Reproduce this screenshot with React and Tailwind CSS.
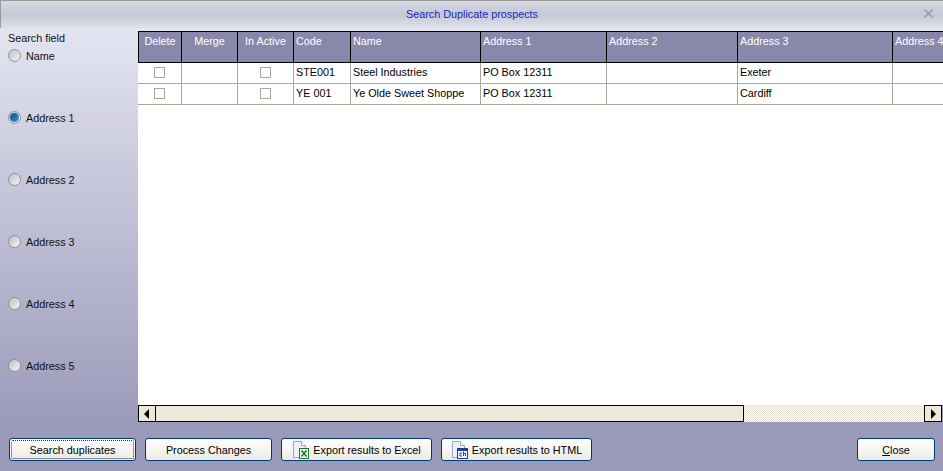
const font = { fontFamily: '"Liberation Sans", Arial, sans-serif' };

const columns = [
  { label: 'Delete', width: 44, center: true },
  { label: 'Merge', width: 56, center: true },
  { label: 'In Active', width: 56, center: true },
  { label: 'Code', width: 57 },
  { label: 'Name', width: 130 },
  { label: 'Address 1', width: 126 },
  { label: 'Address 2', width: 131 },
  { label: 'Address 3', width: 155 },
  { label: 'Address 4', width: 120 },
];

const rows = [
  { code: 'STE001', name: 'Steel Industries', addr1: 'PO Box 12311', addr3: 'Exeter' },
  { code: 'YE 001', name: 'Ye Olde Sweet Shoppe', addr1: 'PO Box 12311', addr3: 'Cardiff' },
];

const fields = ['Name', 'Address 1', 'Address 2', 'Address 3', 'Address 4', 'Address 5'];

function Radio({ checked }) {
  return (
    <span className="relative flex h-[13px] w-[13px] shrink-0 items-center justify-center rounded-full border border-[#8f8f9f] bg-gradient-to-br from-[#bdbdc4] to-[#f8f8f8]">
      {checked && <span className="h-[9px] w-[9px] rounded-full bg-gradient-to-br from-[#0a4f7c] to-[#2f9fd0]" />}
    </span>
  );
}

function Checkbox() {
  return <span className="mx-auto block h-[11px] w-[11px] border border-[#a9a79c] bg-white" />;
}

function Cell({ children, className = '' }) {
  return <td className={`h-[21px] overflow-hidden whitespace-nowrap border-r border-b border-[#aca899] px-[2px] pb-[2px] text-black ${className}`}>{children}</td>;
}

function Grid() {
  return (
    <div className="min-h-0 flex-1 overflow-hidden bg-white">
      <table className="table-fixed border-separate border-spacing-0" style={{ width: 875 }}>
        <colgroup>
          {columns.map((c) => <col key={c.label} style={{ width: c.width }} />)}
        </colgroup>
        <thead>
          <tr>
            {columns.map((c) => (
              <th
                key={c.label}
                className={`h-[32px] overflow-hidden whitespace-nowrap border-t border-r border-b border-black bg-[#8988ab] px-[2px] pb-[13px] pt-[2px] align-top font-normal text-white first:border-l ${c.center ? 'text-center' : 'text-left'}`}
              >
                {c.label}
              </th>
            ))}
          </tr>
        </thead>
        <tbody>
          {rows.map((r) => (
            <tr key={r.code}>
              <Cell><Checkbox /></Cell>
              <Cell />
              <Cell><Checkbox /></Cell>
              <Cell>{r.code}</Cell>
              <Cell>{r.name}</Cell>
              <Cell>{r.addr1}</Cell>
              <Cell />
              <Cell>{r.addr3}</Cell>
              <Cell />
            </tr>
          ))}
        </tbody>
      </table>
    </div>
  );
}

function ScrollBar() {
  return (
    <div className="mr-[1px] flex h-[17px] shrink-0 items-stretch bg-[#f0eee2] bg-[repeating-conic-gradient(#e6e3d3_0_25%,#fbfaf4_0_50%)] bg-[length:2px_2px]">
      <button className="flex w-[18px] items-center justify-center border border-black bg-[#ece9d8]">
        <svg width="6" height="10" viewBox="0 0 6 10"><path d="M5 0v10L0 5z" fill="#000" /></svg>
      </button>
      <div className="w-[588px] border-y border-r border-black bg-[#ece9d8]" />
      <div className="flex-1" />
      <button className="flex w-[18px] items-center justify-center border border-black bg-[#ece9d8]">
        <svg width="6" height="10" viewBox="0 0 6 10"><path d="M1 0v10l5-5z" fill="#000" /></svg>
      </button>
    </div>
  );
}

function ExcelIcon() {
  return (
    <svg width="18" height="18" viewBox="0 0 18 18" className="shrink-0">
      <path d="M1.5 .5h8l4 4v12h-12z" fill="#eef1fa" stroke="#9aa6c4" />
      <path d="M9.5 .5v4h4" fill="#fff" stroke="#9aa6c4" />
      <rect x="7.5" y="7.5" width="9" height="10" fill="#f2fff0" stroke="#1f7a2e" />
      <path d="M9.5 9.5l5 6M14.5 9.5l-5 6" stroke="#1f7a2e" strokeWidth="1.6" />
    </svg>
  );
}

function HtmlIcon() {
  return (
    <svg width="18" height="18" viewBox="0 0 18 18" className="shrink-0">
      <path d="M1.5 .5h8l4 4v12h-12z" fill="#eef1fa" stroke="#9aa6c4" />
      <path d="M9.5 .5v4h4" fill="#fff" stroke="#9aa6c4" />
      <rect x="6.5" y="7.5" width="10" height="10" fill="#f4f7ff" stroke="#1f3f96" />
      <rect x="7" y="8" width="9" height="2" fill="#1f3f96" />
      <path d="M11 12h-2v3h2M12.5 10.5v4.5M12.5 12.5h2v2.5" fill="none" stroke="#1f3f96" />
    </svg>
  );
}

function Button({ children, className = '', focused }) {
  return (
    <button className={`relative flex h-[23px] items-center justify-center gap-[3px] rounded-[3px] border border-[#003c74] bg-gradient-to-b from-white to-[#ecebe5] text-black ${className}`}>
      {focused && <span className="absolute inset-[1px] rounded-[2px] border border-dotted border-[#303060]" />}
      {children}
    </button>
  );
}

export default function App() {
  return (
    <div className="flex h-[471px] w-[943px] flex-col overflow-hidden bg-[#9c9aba] text-[10.8px] leading-[14px]" style={font}>
      <header className="relative flex h-[28px] shrink-0 items-center justify-center border-t border-l border-[#9a9a9a] bg-gradient-to-b from-[#d8dae2] via-[#c3c8d4] to-[#dde1ec] pb-[2px] text-[#1f1fc8]">
        Search Duplicate prospects
        <svg width="9" height="9" viewBox="0 0 9 9" className="absolute right-[10px] top-[8px]">
          <path d="M.5.5l8 8M8.5.5l-8 8" stroke="#8f9bab" strokeWidth="1.5" />
        </svg>
      </header>

      <div className="flex h-[394px] shrink-0 bg-gradient-to-b from-[#e4e5f1] to-[#9c9aba] pt-[3px]">
        <aside className="w-[138px] shrink-0 pl-[8px] text-[#111]">
          <div className="h-[18px]">Search field</div>
          <div className="flex flex-col">
            {fields.map((f, i) => (
              <label key={f} className="flex h-[62px] items-start gap-[5px]">
                <Radio checked={i === 1} />
                <span>{f}</span>
              </label>
            ))}
          </div>
        </aside>
        <main className="flex min-w-0 flex-1 flex-col">
          <Grid />
          <ScrollBar />
        </main>
      </div>

      <footer className="flex flex-1 items-start gap-[9px] pl-[9px] pr-[8px] pt-[16px]">
        <Button focused className="w-[127px]">Search duplicates</Button>
        <Button className="w-[127px]">Process Changes</Button>
        <Button className="w-[151px]"><ExcelIcon />Export results to Excel</Button>
        <Button className="w-[151px]"><HtmlIcon />Export results to HTML</Button>
        <Button className="ml-auto w-[78px]"><span><span className="underline">C</span>lose</span></Button>
      </footer>
    </div>
  );
}
